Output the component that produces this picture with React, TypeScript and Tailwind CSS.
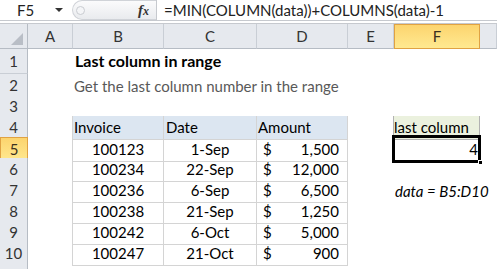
const cols = "grid grid-cols-[28px_45px_91px_93px_91px_46px_86px_1fr]";

const rowHdr =
  "flex items-center justify-center border-r border-b border-r-[#b6bcc4] border-b-[#c9ced5] bg-[#e6e9ee] text-[15px] text-[#333]";
const colHdr =
  "flex items-center justify-center border-r border-b border-r-[#c9ced5] border-b-[#b6bcc4] bg-[#e6e9ee] text-[15px] text-[#333]";
const tb = "border-[#d4d4d4]";

const rows = [
  ["100123", "1-Sep", "1,500"],
  ["100234", "22-Sep", "12,000"],
  ["100236", "6-Sep", "6,500"],
  ["100238", "21-Sep", "1,250"],
  ["100242", "6-Oct", "5,000"],
  ["100247", "21-Oct", "900"],
];

export default function App() {
  return (
    <div className="h-[269px] w-[497px] overflow-hidden bg-white font-[Lato,sans-serif] text-black">
      {/* formula bar */}
      <div className="flex h-[21px] items-center border-b border-[#c6c9ce]">
        <div className="flex w-[72px] items-center">
          <span className="ml-[17px] text-[15px] text-[#222]">F5</span>
          <span className="ml-auto mr-[9px] h-0 w-0 border-x-[4px] border-t-[4px] border-x-transparent border-t-[#333]" />
        </div>
        <div className="flex h-[20px] w-[84px] items-center rounded-l-[10px] border border-r-0 border-[#d0d3d8] bg-gradient-to-b from-[#fbfbfc] to-[#e9ebee]">
          <span className="ml-[3px] h-[9px] w-[9px] rounded-full border border-[#c9ccd1] bg-[#f4f5f7]" />
          <span className="ml-auto mr-[7px] font-['Liberation_Serif',serif] text-[15px] font-bold italic text-[#333]">
            f<span className="text-[12px]">x</span>
          </span>
        </div>
        <div className="flex h-full flex-1 items-center border-l border-[#c6c9ce] pl-[7px] text-[15px] text-[#222]">
          =MIN(COLUMN(data))+COLUMNS(data)-1
        </div>
      </div>
      <div className="h-[3px] border-b border-[#c6c9ce] bg-white" />

      {/* column headers */}
      <div className={`${cols} h-[22px]`}>
        <div className="relative border-r border-b border-r-[#b6bcc4] border-b-[#b6bcc4] bg-[#e6e9ee]">
          <span className="absolute bottom-[3px] right-[4px] h-0 w-0 border-b-[12px] border-l-[12px] border-b-[#b9bec6] border-l-transparent" />
        </div>
        <div className={colHdr}>A</div>
        <div className={colHdr}>B</div>
        <div className={colHdr}>C</div>
        <div className={colHdr}>D</div>
        <div className={colHdr}>E</div>
        <div className="flex items-center justify-center border border-[#e0a243] bg-gradient-to-b from-[#fcd46e] to-[#ffe990] text-[15px] text-[#3a3020]">
          F
        </div>
        <div className={colHdr} />
      </div>

      {/* row 1 */}
      <div className={`${cols} h-[28px]`}>
        <div className={`${rowHdr} items-end pb-[1px]`}>1</div>
        <div />
        <div className="col-span-3 flex items-end pb-[1px] pl-[2px] text-[16px] font-bold">
          Last column in range
        </div>
        <div />
        <div />
        <div />
      </div>

      {/* row 2 */}
      <div className={`${cols} h-[21px]`}>
        <div className={rowHdr}>2</div>
        <div />
        <div className="col-span-5 flex items-center whitespace-nowrap pl-[1px] text-[15px] text-[#595959]">
          Get the last column number in the range
        </div>
        <div />
      </div>

      {/* row 3 */}
      <div className={`${cols} h-[21px]`}>
        <div className={rowHdr}>3</div>
        <div />
        <div className={`border-b ${tb}`} />
        <div className={`border-b ${tb}`} />
        <div className={`border-b ${tb}`} />
        <div />
        <div className="border-b border-[#b2b2b2]" />
        <div />
      </div>

      {/* row 4 */}
      <div className={`${cols} h-[21px]`}>
        <div className={rowHdr}>4</div>
        <div className={`border-r ${tb}`} />
        <div className={`flex items-center border-r border-b ${tb} bg-[#dce6f1] pl-[1px] text-[15px]`}>Invoice</div>
        <div className={`flex items-center border-r border-b ${tb} bg-[#dce6f1] pl-[2px] text-[15px]`}>Date</div>
        <div className={`flex items-center border-r border-b ${tb} bg-[#dce6f1] pl-[1px] text-[15px]`}>Amount</div>
        <div className="border-r border-[#b2b2b2]" />
        <div className="flex items-center border-r border-b border-[#b2b2b2] bg-[#ebf1de] text-[15px]">last column</div>
        <div />
      </div>

      {/* data rows */}
      {rows.map((r, i) => (
        <div key={r[0]} className={`${cols} h-[21px]`}>
          {i === 0 ? (
            <div className="flex items-center justify-center border border-[#e0a243] bg-gradient-to-b from-[#fcd46e] to-[#ffe990] text-[15px] text-[#3a3020]">
              5
            </div>
          ) : (
            <div className={rowHdr}>{i + 5}</div>
          )}
          <div className={`border-r ${tb}`} />
          <div className={`flex items-center justify-center border-r border-b ${tb} text-[15px]`}>{r[0]}</div>
          <div className={`flex items-center justify-center border-r border-b ${tb} text-[15px]`}>{r[1]}</div>
          <div className={`flex items-center justify-between border-r border-b ${tb} pl-[6px] pr-[8px] text-[15px]`}>
            <span>$</span>
            <span>{r[2]}</span>
          </div>
          <div />
          {i === 0 ? (
            <div className="relative flex items-center justify-end pr-[2px] text-[15px]">
              4
              <span className="absolute -left-[2px] -right-[1px] -top-[2px] -bottom-[1px] border-[2px] border-black" />
              <span className="absolute -left-[0px] right-[1px] top-[0px] bottom-[1px] border border-black" />
              <span className="absolute -bottom-[3px] -right-[3px] h-[5px] w-[5px] border border-white bg-black" />
            </div>
          ) : i === 2 ? (
            <div className="flex items-center whitespace-nowrap pl-[1px] text-[15px] italic">data = B5:D10</div>
          ) : (
            <div />
          )}
          <div />
        </div>
      ))}

      {/* row 11 */}
      <div className={`${cols} h-[10px]`}>
        <div className={rowHdr} />
      </div>
    </div>
  );
}
